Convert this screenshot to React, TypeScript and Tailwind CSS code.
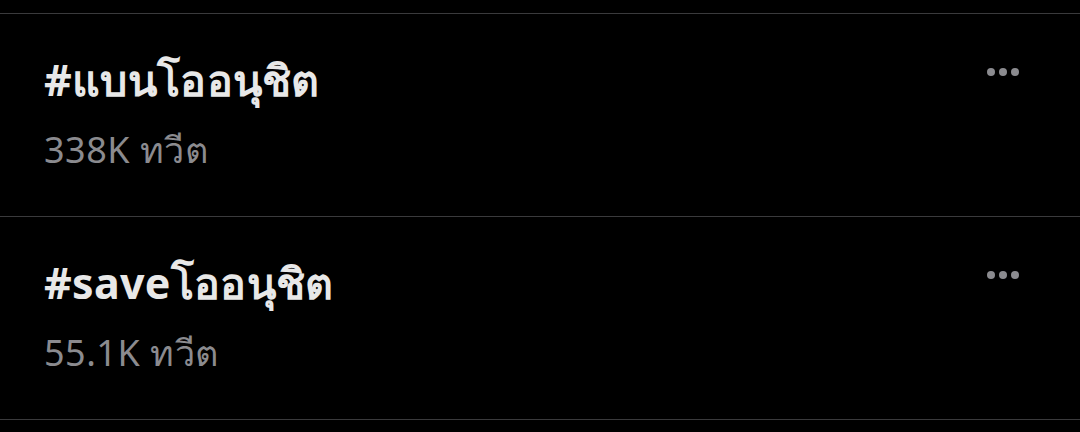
import React from "react";

const trends = [
  { tag: "#แบนโออนุชิต", count: "338K ทวีต" },
  { tag: "#saveโออนุชิต", count: "55.1K ทวีต" },
];

function MoreDots() {
  return (
    <div className="flex items-center gap-[4px] self-start pt-[54px]">
      <span className="block h-[8px] w-[8px] rounded-full bg-[#8b8b8f]" />
      <span className="block h-[8px] w-[8px] rounded-full bg-[#8b8b8f]" />
      <span className="block h-[8px] w-[8px] rounded-full bg-[#8b8b8f]" />
    </div>
  );
}

export default function App() {
  return (
    <div
      className="h-[432px] w-[1080px] overflow-hidden bg-black pt-[13px]"
      style={{ fontFamily: '"Noto Sans", "Open Sans", sans-serif' }}
    >
      {trends.map((t) => (
        <div
          key={t.tag}
          className="flex h-[203px] items-start justify-between border-t border-[#3a3a3c] pl-[44px] pr-[61px]"
        >
          <div className="flex flex-col pt-[38px]">
            <div className="text-[43px] font-bold leading-[56px] tracking-[0.3px] text-[#e8e8e8]">{t.tag}</div>
            <div className="mt-[18px] text-[36px] leading-[48px] tracking-[0.5px] text-[#8b8b8f]">{t.count}</div>
          </div>
          <MoreDots />
        </div>
      ))}
      <div className="border-t border-[#3a3a3c]" />
    </div>
  );
}
